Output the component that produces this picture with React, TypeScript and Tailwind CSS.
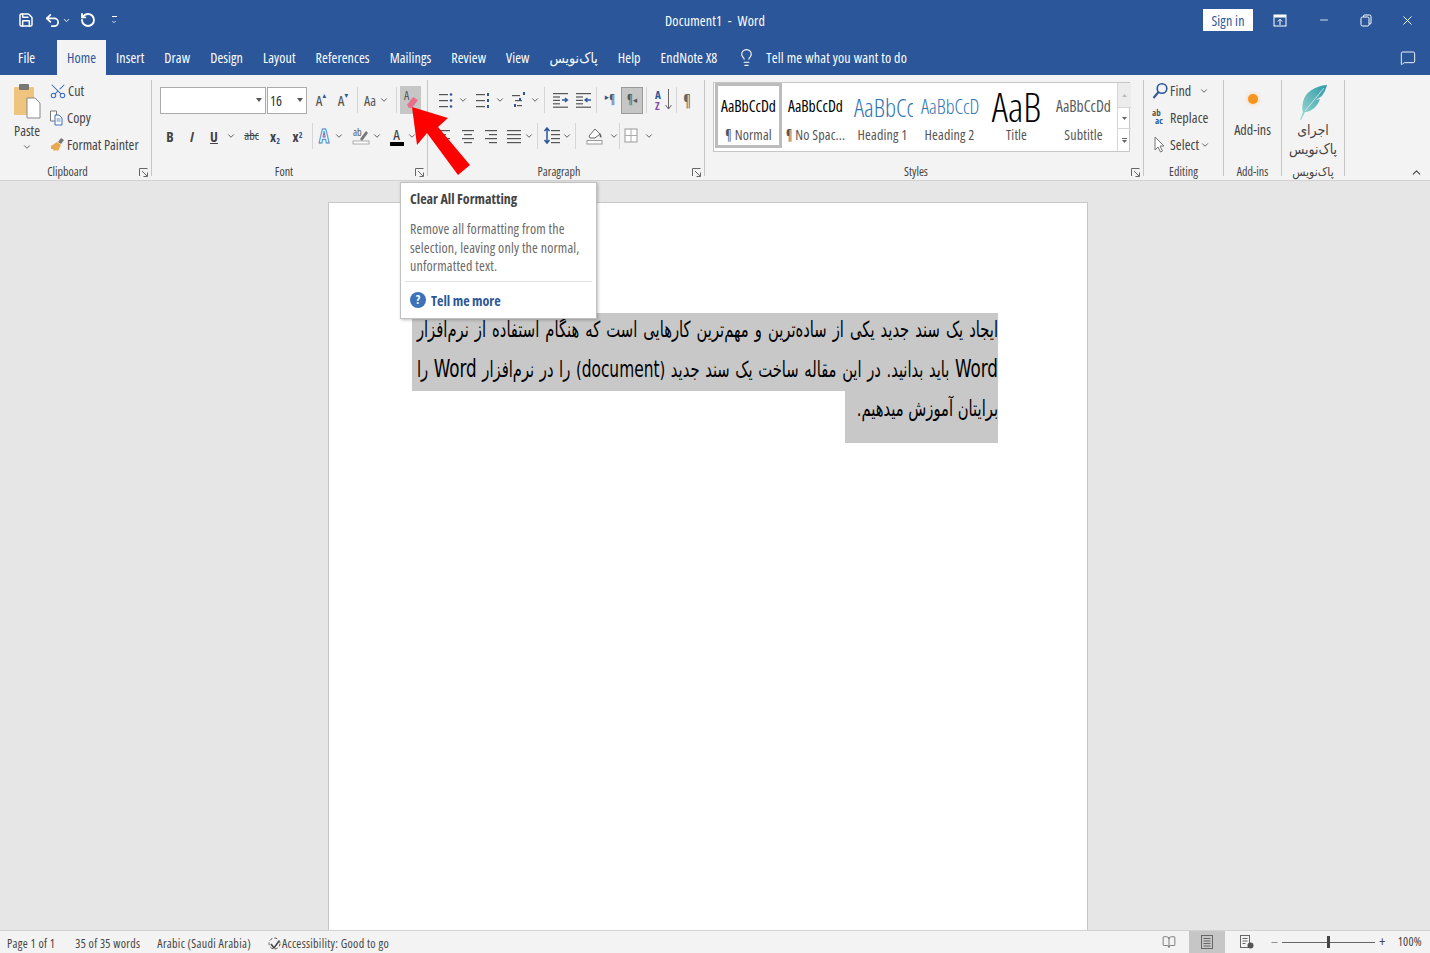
import { Save, Undo2, RotateCw, ChevronDown, Scissors, Lightbulb, MessageSquare, X, Minus, ChevronUp, BookOpen } from 'lucide-react';
import type { ReactNode } from 'react';

const tabs = ['Insert', 'Draw', 'Design', 'Layout', 'References', 'Mailings', 'Review', 'View', 'پاک‌نویس', 'Help', 'EndNote X8'];

function Chev({ className = '' }: { className?: string }) {
  return <ChevronDown className={`h-[10px] w-[10px] shrink-0 text-[#444] ${className}`} strokeWidth={2} />;
}

function Sep() {
  return <div className="mx-[3px] h-[26px] w-px shrink-0 bg-[#d6d6d6]" />;
}

// little stack of grey lines used by the paragraph icons
function Lines({ x, ws, y0 = 3, step = 4, color = '#555' }: { x: number[]; ws: number[]; y0?: number; step?: number; color?: string }) {
  return (
    <>
      {ws.map((w, i) => (
        <rect key={i} x={x[i] ?? x[0]} y={y0 + i * step} width={w} height="1.2" fill={color} />
      ))}
    </>
  );
}

function Ico({ children, w = 18 }: { children: ReactNode; w?: number }) {
  return (
    <svg width={w} height="18" viewBox={`0 0 ${w} 18`} className="shrink-0">
      {children}
    </svg>
  );
}

function GroupLabel({ children, launcher, className = '' }: { children: ReactNode; launcher?: boolean; className?: string }) {
  return (
    <div className={`relative mt-auto -mb-[4px] flex h-[17px] items-center justify-center text-[12px] leading-none text-[#444] ${className}`}>
      {children}
      {launcher && (
        <svg width="9" height="9" viewBox="0 0 9 9" className="absolute bottom-[3px] right-[3px]">
          <path d="M0.5 8V0.5H8.5M3 3l5 5M4.5 8.5H8.5V4.5" stroke="#666" fill="none" strokeWidth="1" />
        </svg>
      )}
    </div>
  );
}

function StyleItem({ sample, name, cls, active }: { sample: string; name: string; cls: string; active?: boolean }) {
  return (
    <div className={`flex h-[65px] w-[67px] shrink-0 flex-col items-center overflow-hidden ${active ? 'border-[3px] border-[#bcbcbc]' : 'border-[3px] border-transparent'}`}>
      <div className={`flex h-[40px] w-full items-center justify-center overflow-hidden whitespace-nowrap pt-[2px] leading-none ${cls}`}>{sample}</div>
      <div className="text-[14px] leading-[18px] tracking-[0.15px] text-[#555] whitespace-nowrap">{name}</div>
    </div>
  );
}

export default function App() {
  return (
    <div className="relative flex h-[953px] w-[1430px] flex-col overflow-hidden bg-[#e6e6e6] font-['Open_Sans','DejaVu_Sans_Condensed',sans-serif] [font-stretch:75%]">
      {/* title bar */}
      <div className="relative flex h-[40px] shrink-0 items-center bg-[#2b579a] text-white">
        <div className="flex items-center pl-[18px]">
          <Save className="h-[16px] w-[16px]" strokeWidth={2.2} />
          <Undo2 className="ml-[10px] h-[17px] w-[17px]" strokeWidth={2.4} />
          <ChevronDown className="ml-[1px] h-[9px] w-[9px]" strokeWidth={2.5} />
          <RotateCw className="ml-[9px] h-[16px] w-[16px] -scale-x-100" strokeWidth={2.8} />
          <div className="ml-[15px] flex flex-col items-center gap-[2px]">
            <div className="h-px w-[5px] bg-white" />
            <ChevronDown className="h-[6px] w-[6px]" strokeWidth={3} />
          </div>
        </div>
        <div className="absolute left-[665px] top-[12px] text-[14px] leading-[18px] tracking-[0.2px] whitespace-pre">Document1  -  Word</div>
        <div className="ml-auto flex items-center">
          <div className="flex h-[22px] w-[50px] items-center justify-center bg-white text-[14px] tracking-[0.15px] text-[#2b579a]">Sign in</div>
          <svg width="14" height="13" viewBox="0 0 14 13" className="ml-[20px]">
            <rect x="1" y="1" width="12" height="11" fill="none" stroke="#fff" />
            <rect x="1" y="1" width="12" height="2.5" fill="#fff" />
            <path d="M7 11V5.5M4.8 7.5L7 5.3l2.2 2.2" stroke="#fff" fill="none" />
          </svg>
          <Minus className="ml-[31px] h-[12px] w-[12px]" strokeWidth={1.6} />
          <svg width="12" height="13" viewBox="0 0 12 13" className="ml-[30px]">
            <rect x="1" y="3" width="8" height="9" rx="1.5" fill="none" stroke="#fff" />
            <path d="M3.5 3V2a1 1 0 011-1h5a1.5 1.5 0 011.5 1.5V9a1 1 0 01-1 1H9" fill="none" stroke="#fff" />
          </svg>
          <X className="ml-[28px] mr-[15px] h-[15px] w-[15px]" strokeWidth={1.5} />
        </div>
      </div>

      {/* tabs */}
      <div className="flex h-[35px] shrink-0 items-center bg-[#2b579a] text-[14px] tracking-[0.1px] text-white">
        <div className="ml-[18px] w-[39px]">File</div>
        <div className="flex h-full w-[49px] items-center justify-center bg-[#f3f3f3] text-[#2b579a]">Home</div>
        <div className="ml-[10px] flex items-center gap-[20px]">
          {tabs.map((t) => (
            <div key={t} className="whitespace-nowrap">{t}</div>
          ))}
        </div>
        <Lightbulb className="ml-[20px] h-[19px] w-[19px]" strokeWidth={1.4} />
        <div className="ml-[10px] whitespace-nowrap tracking-[0.2px]">Tell me what you want to do</div>
        <MessageSquare className="ml-auto mr-[14px] h-[16px] w-[16px]" strokeWidth={1.4} />
      </div>

      {/* ribbon */}
      <div className="flex h-[106px] shrink-0 border-b border-[#d2d2d2] bg-[#f3f3f3] pt-[5px] pb-[4px]">
        {/* clipboard */}
        <div className="flex w-[152px] shrink-0 flex-col border-r border-[#c6c6c6]">
          <div className="flex pl-[8px]">
            <div className="flex w-[38px] flex-col items-center">
              <svg width="28" height="36" viewBox="0 0 28 36" className="mt-[3px]">
                <rect x="1" y="4" width="20" height="28" rx="1" fill="#eec47f" />
                <rect x="6" y="1" width="10" height="6" rx="1" fill="#777" />
                <path d="M14 15h8l5 5v15H14z" fill="#fff" stroke="#888" />
              </svg>
              <div className="mt-[4px] text-[14px] leading-[16px] text-[#444]">Paste</div>
              <Chev className="mt-[3px]" />
            </div>
            <div className="ml-[3px] -mt-[3px] flex flex-col text-[14px] text-[#444]">
              <div className="flex h-[27px] items-center gap-[1px]">
                <Scissors className="h-[18px] w-[18px] -rotate-90 text-[#3d6fb5]" strokeWidth={1.4} />
                <span>Cut</span>
              </div>
              <div className="flex h-[27px] items-center gap-[2px]">
                <Ico w={16}>
                  <path d="M1.5 2h6l0 10h-6z" fill="#fff" stroke="#777" />
                  <path d="M6 6h4l3 3v7H6z" fill="#fff" stroke="#3d6fb5" />
                  <path d="M7.500 10h4M7.500 12h4" stroke="#3d6fb5" strokeWidth="0.8" />
                </Ico>
                <span>Copy</span>
              </div>
              <div className="flex h-[27px] items-center gap-[2px]">
                <Ico w={16}>
                  <path d="M9 6l3-4 3 2-3 4z" fill="#777" />
                  <path d="M2 10l6-4 4 3-3 6-2-1-2 1-1-2-2 0z" fill="#e9a94f" />
                </Ico>
                <span className="whitespace-nowrap">Format Painter</span>
              </div>
            </div>
          </div>
          <GroupLabel launcher className="pr-[16px]">Clipboard</GroupLabel>
        </div>

        {/* font */}
        <div className="flex w-[276px] shrink-0 flex-col border-r border-[#c6c6c6] pl-[7px]">
          <div className="mt-[6px] flex h-[28px] items-center text-[#555]">
            <div className="ml-px flex h-[27px] w-[106px] items-center justify-end border border-[#ababab] bg-white pr-[3px]">
              <svg width="6" height="4" viewBox="0 0 6 4"><path d="M0 0h6L3 4z" fill="#555" /></svg>
            </div>
            <div className="ml-[1px] flex h-[27px] w-[40px] items-center justify-between border border-[#ababab] bg-white pl-[2px] pr-[3px] text-[14px] text-[#333]">
              16
              <svg width="6" height="4" viewBox="0 0 6 4"><path d="M0 0h6L3 4z" fill="#555" /></svg>
            </div>
            <div className="ml-[3px] flex w-[22px] justify-center text-[15px]">A<span className="text-[8px] text-[#2b579a]">▴</span></div>
            <div className="flex w-[22px] justify-center text-[15px]">A<span className="text-[8px] text-[#2b579a]">▾</span></div>
            <Sep />
            <div className="ml-[3px] text-[14px]">Aa</div>
            <Chev className="ml-[3px]" />
            <div className="ml-[4px]"><Sep /></div>
            <div className="flex h-[28px] w-[21px] items-start bg-[#c6c6c6] pl-[4px] pt-[1px] text-[12px]">
              A
            </div>
          </div>
          <div className="mt-[8px] flex h-[28px] items-center text-[14px] text-[#444]">
            <div className="w-[21px] pl-[1px] text-center font-bold">B</div>
            <div className="w-[24px] text-center font-bold italic">I</div>
            <div className="w-[20px] text-center font-bold underline">U</div>
            <Chev className="ml-[2px]" />
            <div className="ml-[3px] w-[25px] text-center text-[12px] line-through">abc</div>
            <div className="w-[22px] text-center font-bold">x<sub className="text-[8px] text-[#2b579a]">2</sub></div>
            <div className="w-[23px] text-center font-bold">x<sup className="text-[8px] text-[#2b579a]">2</sup></div>
            <Sep />
            <div className="ml-[1px] w-[14px] text-center text-[19px] leading-none font-bold text-white [-webkit-text-stroke:1px_#4a86c8]">A</div>
            <Chev className="ml-[3px]" />
            <div className="ml-[8px] w-[21px]">
              <Ico w={20}>
                <text x="1" y="9" fontSize="10" fill="#555">ab</text>
                <path d="M8 12l6-8 2 2-6 8z" fill="#777" />
                <rect x="1" y="14" width="16" height="3" fill="#fff" stroke="#999" strokeWidth="0.8" />
              </Ico>
            </div>
            <Chev className="ml-[-1px]" />
            <div className="ml-[7px] flex w-[15px] flex-col items-center text-[15px] leading-[15px]">
              A
              <div className="h-[4px] w-[14px] bg-black" />
            </div>
            <Chev className="ml-[3px]" />
          </div>
          <GroupLabel launcher className="pr-[18px]">Font</GroupLabel>
        </div>

        {/* paragraph */}
        <div className="flex w-[277px] shrink-0 flex-col border-r border-[#c6c6c6] pl-[8px]">
          <div className="mt-[6px] flex h-[28px] items-center">
            <div className="ml-px"><Ico><Lines x={[2]} ws={[9, 9, 9]} y0={3} step={6} /><circle cx="14" cy="3.5" r="1.3" fill="#2b579a" /><circle cx="14" cy="9.5" r="1.3" fill="#2b579a" /><circle cx="14" cy="15.5" r="1.3" fill="#2b579a" /></Ico></div>
            <Chev className="ml-[3px]" />
            <div className="ml-[6px]"><Ico><Lines x={[2]} ws={[9, 9, 9]} y0={3} step={6} /><rect x="13" y="2" width="2" height="3" fill="#2b579a" /><rect x="13" y="8" width="2" height="3" fill="#2b579a" /><rect x="13" y="14" width="2" height="3" fill="#2b579a" /></Ico></div>
            <Chev className="ml-[3px]" />
            <div className="ml-[6px]"><Ico><Lines x={[1, 4, 6]} ws={[8, 7, 5]} y0={4} step={5} /><rect x="12" y="1" width="2" height="3" fill="#2b579a" /><rect x="8" y="7" width="2" height="3" fill="#2b579a" /><rect x="3" y="13" width="2" height="3" fill="#2b579a" /></Ico></div>
            <Chev className="ml-[1px]" />
            <div className="ml-[1px]"><Sep /></div>
            <div className="ml-[4px]"><Ico><Lines x={[1, 1, 1, 1, 1]} ws={[15, 7, 7, 7, 15]} y0={2} step={3.4} /><path d="M10 5h5M13 3l2.5 2-2.5 2" transform="translate(0 4)" stroke="#2b579a" fill="none" strokeWidth="1.3" /></Ico></div>
            <div className="ml-[5px]"><Ico><Lines x={[1, 1, 1, 1, 1]} ws={[15, 7, 7, 7, 15]} y0={2} step={3.4} /><path d="M10 9h6M12.5 7L10 9l2.5 2" stroke="#2b579a" fill="none" strokeWidth="1.3" /></Ico></div>
            <Sep />
            <div className="-ml-[1px] flex w-[22px] justify-center text-[13px] text-[#555]"><span className="text-[9px] text-[#2b579a]">▸</span>¶</div>
            <div className="flex h-[27px] w-[22px] items-center justify-center border border-[#9a9a9a] bg-[#c6c6c6] text-[13px] text-[#555]">¶<span className="text-[9px] text-[#555]">◂</span></div>
            <Sep />
            <div className="ml-[3px] flex h-[24px] w-[19px] items-center justify-between pl-[2px] text-[11px] leading-[11px] font-bold">
              <div className="flex flex-col">
                <span className="text-[#2b579a]">A</span>
                <span className="text-[#8a4aa8]">Z</span>
              </div>
              <svg width="7" height="22" viewBox="0 0 7 22" className="shrink-0"><path d="M3.5 0v20M0.5 16l3 4 3-4" stroke="#666" fill="none" /></svg>
            </div>
            <div className="ml-[1px]"><Sep /></div>
            <div className="ml-[3px] text-[17px] text-[#666]">¶</div>
          </div>
          <div className="mt-[8px] flex h-[28px] items-center">
            <Ico><Lines x={[2, 2, 2, 2]} ws={[12, 8, 12, 8]} y0={3} /></Ico>
            <div className="ml-[5px]"><Ico><Lines x={[3, 5, 3, 5]} ws={[12, 8, 12, 8]} y0={3} /></Ico></div>
            <div className="ml-[5px]"><Ico><Lines x={[3, 7, 3, 7]} ws={[12, 8, 12, 8]} y0={3} /></Ico></div>
            <div className="ml-[5px]"><Ico><Lines x={[2]} ws={[14, 14, 14, 14]} y0={3} /></Ico></div>
            <Chev className="ml-[1px]" />
            <Sep />
            <div className="ml-[2px]"><Ico><path d="M4 1v15M1.5 4L4 1l2.5 3M1.5 13L4 16l2.5-3" stroke="#2b579a" fill="none" strokeWidth="1.5" /><Lines x={[8]} ws={[9, 9, 9, 9]} y0={3} /></Ico></div>
            <Chev className="ml-[1px]" />
            <Sep />
            <div className="ml-[7px]"><Ico><path d="M3 9l6-7 5 5-5 4H4z" fill="#fff" stroke="#666" /><path d="M14 6c2 3 2 4 1 4.500s-2-1-1-4.500z" fill="#666" /><rect x="1" y="13.500" width="15" height="3.500" fill="#fff" stroke="#999" /></Ico></div>
            <Chev className="ml-[5px]" />
            <div className="-ml-[3px]"><Sep /></div>
            <Ico w={16}><rect x="2" y="2" width="12" height="13" fill="#fff" stroke="#999" /><path d="M8 2v13M2 8.500h12" stroke="#aaa" /></Ico>
            <Chev className="ml-[5px]" />
          </div>
          <GroupLabel launcher className="pr-[22px]">Paragraph</GroupLabel>
        </div>

        {/* styles */}
        <div className="flex w-[439px] shrink-0 flex-col border-r border-[#c6c6c6] pl-[8px]">
          <div className="mt-[2px] flex h-[70px] w-[417px] border border-[#c6c6c6] bg-white pl-px">
            <StyleItem active sample="AaBbCcDd" name="¶ Normal" cls="text-[15.500px] text-black" />
            <StyleItem sample="AaBbCcDd" name="¶ No Spac..." cls="text-[15.500px] text-black" />
            <StyleItem sample="AaBbCc" name="Heading 1" cls="justify-start! pl-[2px] text-[25px] font-light text-[#2e74b5]" />
            <StyleItem sample="AaBbCcD" name="Heading 2" cls="justify-start! pl-[2px] text-[20px] font-light text-[#2e74b5]" />
            <StyleItem sample="AaB" name="Title" cls="text-[40px] font-light text-black" />
            <StyleItem sample="AaBbCcDd" name="Subtitle" cls="text-[15.500px] text-[#5a5a5a]" />
            <div className="ml-auto flex w-[14px] shrink-0 flex-col border-l border-[#d6d6d6] text-[#777]">
              <div className="flex h-[24px] items-center justify-center bg-[#ececec]"><svg width="5" height="3" viewBox="0 0 5 3"><path d="M0 3h5L2.500 0z" fill="#bbb" /></svg></div>
              <div className="flex h-[22px] items-center justify-center border-y border-[#d6d6d6]"><svg width="5" height="3" viewBox="0 0 5 3"><path d="M0 0h5L2.500 3z" fill="#666" /></svg></div>
              <div className="flex flex-1 flex-col items-center justify-center gap-[1px]"><div className="h-px w-[5px] bg-[#666]" /><svg width="5" height="3" viewBox="0 0 5 3"><path d="M0 0h5L2.500 3z" fill="#666" /></svg></div>
            </div>
          </div>
          <GroupLabel launcher className="pr-[24px]">Styles</GroupLabel>
        </div>

        {/* editing */}
        <div className="flex w-[80px] shrink-0 flex-col border-r border-[#c6c6c6] pl-[8px] text-[14px] tracking-[0.1px] text-[#444]">
          <div className="-mt-[3px] flex h-[27px] items-center gap-[2px]">
            <svg width="16" height="18" viewBox="0 0 16 18" className="shrink-0">
              <circle cx="10" cy="6.500" r="4.800" fill="none" stroke="#2b579a" strokeWidth="1.600" />
              <path d="M6.500 10l-5 6" stroke="#2b579a" strokeWidth="2" />
            </svg>
            <span>Find</span>
            <Chev className="ml-[6px]" />
          </div>
          <div className="flex h-[27px] items-center gap-px">
            <div className="flex h-[17px] w-[17px] flex-col text-[9px] leading-[8px] font-bold">
              <span className="text-[#555]">ab</span>
              <span className="pl-[3px] text-[#2b579a]">ac</span>
            </div>
            <span>Replace</span>
          </div>
          <div className="flex h-[27px] items-center gap-[3px]">
            <svg width="15" height="17" viewBox="0 0 15 17" className="shrink-0">
              <path d="M3 1l9 9H8l2.500 5-2 1L6 11l-3 3z" fill="#fff" stroke="#777" />
            </svg>
            <span>Select</span>
            <Chev className="-ml-[2px]" />
          </div>
          <div className="mt-auto -ml-[8px]"><GroupLabel>Editing</GroupLabel></div>
        </div>

        {/* add-ins */}
        <div className="flex w-[58px] shrink-0 flex-col items-center border-r border-[#c6c6c6] text-[#444]">
          <div className="mt-[14px] h-[10px] w-[10px] rounded-full bg-[#f7941d] shadow-[0_0_4px_#fbc68a]" />
          <div className="mt-[15px] text-[14px]">Add-ins</div>
          <div className="mt-auto w-full"><GroupLabel>Add-ins</GroupLabel></div>
        </div>

        {/* pakneviss */}
        <div className="flex w-[63px] shrink-0 flex-col items-center border-r border-[#c6c6c6] text-[#444]">
          <svg width="30" height="37" viewBox="0 0 30 37" className="mt-[4px]">
            <defs>
              <linearGradient id="feather" x1="0" y1="1" x2="1" y2="0">
                <stop offset="0" stopColor="#9fdcd2" />
                <stop offset="1" stopColor="#2f98a8" />
              </linearGradient>
            </defs>
            <path d="M29 1C17 2 7 8 5 18c-1 5-1 8 0 10l-3 8 1 0 4-8c6 0 13-6 15-13l-4 1 6-4c2-3 4-7 5-11z" fill="url(#feather)" />
            <path d="M26 4L7 27" stroke="#d6f0ee" strokeWidth="0.8" />
          </svg>
          <div dir="rtl" className="-mt-[1px] text-center text-[14px] leading-[19px]">اجرای<br />پاک‌نویس</div>
          <div dir="rtl" className="mt-auto w-full"><GroupLabel>پاک‌نویس</GroupLabel></div>
        </div>

        <div className="flex flex-1 items-end justify-end pr-[7px]">
          <ChevronUp className="-mb-[3px] h-[13px] w-[13px] text-[#444]" strokeWidth={2} />
        </div>
      </div>

      {/* document area */}
      <div className="min-h-0 flex-1 overflow-hidden pl-[328px] pt-[21px]">
        <div className="h-[760px] w-[760px] border border-[#c6c6c6] bg-white pl-[83px] pt-[110px] text-black">
          <div dir="rtl" className="w-[586px] font-['DejaVu_Sans_Condensed',sans-serif] text-[22px]">
            <div className="h-[39px] bg-[#c8c8c8]">
              <div className="w-[780px] origin-right scale-x-[0.745] leading-[34px] [text-align-last:justify]">ایجاد یک سند جدید یکی از ساده‌ترین و مهم‌ترین کارهایی است که هنگام استفاده از نرم‌افزار</div>
            </div>
            <div className="h-[39px] bg-[#c8c8c8]">
              <div className="w-[780px] origin-right scale-x-[0.745] leading-[34px] [text-align-last:justify]">
                <span className="text-[25px]">Word</span> باید بدانید. در این مقاله ساخت یک سند جدید (<span className="text-[23px]">document</span>) را در نرم‌افزار <span className="text-[25px]">Word</span> را
              </div>
            </div>
            <div className="h-[52px] w-[153px] bg-[#c8c8c8]">
              <div className="origin-right scale-x-[0.745] leading-[36px] whitespace-nowrap">برایتان آموزش میدهیم.</div>
            </div>
          </div>
        </div>
      </div>

      {/* status bar */}
      <div className="flex h-[23px] shrink-0 items-center border-t border-[#d2d2d2] bg-[#f3f3f3] pl-[7px] pt-[3px] text-[12px] tracking-[0.3px] text-[#444]">
        <span>Page 1 of 1</span>
        <span className="ml-[20px]">35 of 35 words</span>
        <span className="ml-[17px]">Arabic (Saudi Arabia)</span>
        <svg width="15" height="15" viewBox="0 0 15 15" className="ml-[16px]">
          <circle cx="7.5" cy="7.500" r="5.500" fill="none" stroke="#555" strokeDasharray="3 2" />
          <path d="M4 8l3 4 5-7" fill="none" stroke="#444" strokeWidth="1.5" />
        </svg>
        <span>Accessibility: Good to go</span>
        <div className="ml-auto -mt-[3px] flex h-[22px] items-center">
          <BookOpen className="h-[14px] w-[14px] text-[#666]" strokeWidth={1.4} />
          <div className="ml-[13px] flex h-full w-[36px] items-center justify-center bg-[#c6c6c6]">
            <svg width="12" height="14" viewBox="0 0 12 14"><rect x="0.500" y="0.500" width="11" height="13" fill="none" stroke="#666" /><path d="M2.500 3.500h7M2.500 6h7M2.500 8.500h7M2.500 11h7" stroke="#666" /></svg>
          </div>
          <svg width="14" height="14" viewBox="0 0 14 14" className="ml-[15px]"><rect x="0.500" y="0.500" width="9" height="12" fill="none" stroke="#666" /><path d="M2.500 3.500h5M2.500 6h5M2.500 8.500h3" stroke="#666" /><circle cx="10.500" cy="10.500" r="3" fill="#555" /></svg>
          <Minus className="ml-[16px] h-[9px] w-[9px] text-[#444]" strokeWidth={1.5} />
          <div className="relative ml-[3px] flex h-[12px] w-[93px] items-center">
            <div className="h-px w-full bg-[#666]" />
            <div className="absolute left-[45px] top-0 h-[12px] w-[3px] bg-[#444]" />
          </div>
          <span className="ml-[4px] text-[14px] leading-none">+</span>
          <span className="ml-[12px] mr-[8px]">100%</span>
        </div>
      </div>

      {/* tooltip and the pointer lie over the ribbon */}
      <div className="absolute left-[400px] top-[182px] h-[137px] w-[197px] border border-[#c0c0c0] bg-white px-[9px] shadow-[1px_1px_3px_rgba(0,0,0,0.25)]">
        <div className="mt-[7px] text-[14px] leading-[18px] font-bold text-[#444]">Clear All Formatting</div>
        <div className="mt-[12px] text-[14px] leading-[18.5px] tracking-[0.15px] text-[#6a6a6a]">
          Remove all formatting from the<br />selection, leaving only the normal,<br />unformatted text.
        </div>
        <div className="-mx-[5px] mt-[5px] h-px bg-[#e2e2e2]" />
        <div className="mt-[8px] flex items-center gap-[5px] text-[14px] font-bold text-[#2b579a]">
          <div className="flex h-[16px] w-[16px] items-center justify-center rounded-full bg-[#3d72b8] text-[12px] text-white">?</div>
          Tell me more
        </div>
      </div>
      <svg width="64" height="72" viewBox="0 0 64 72" className="absolute left-[410px] top-[105px]">
        <path d="M2 2l36 11-10 9 32 38-12 10-31-42-10 12z" fill="#f00" />
      </svg>
      <svg width="14" height="14" viewBox="0 0 14 14" className="absolute left-[405px] top-[95px]">
        <path d="M2 10l6-8 5 3-6 8-3 0z" fill="#e8708a" />
      </svg>
    </div>
  );
}
